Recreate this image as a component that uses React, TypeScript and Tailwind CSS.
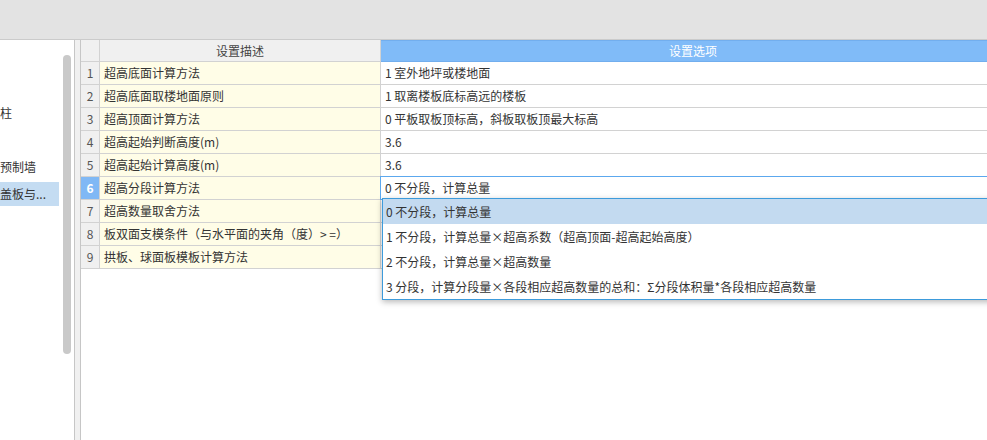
const rows = [
  { desc: "超高底面计算方法", value: "1 室外地坪或楼地面" },
  { desc: "超高底面取楼地面原则", value: "1 取离楼板底标高远的楼板" },
  { desc: "超高顶面计算方法", value: "0 平板取板顶标高，斜板取板顶最大标高" },
  { desc: "超高起始判断高度(m)", value: "3.6" },
  { desc: "超高起始计算高度(m)", value: "3.6" },
  { desc: "超高分段计算方法", value: "0 不分段，计算总量" },
  { desc: "超高数量取舍方法", value: "" },
  { desc: "板双面支模条件（与水平面的夹角（度）> =）", value: "" },
  { desc: "拱板、球面板模板计算方法", value: "" },
];

const options = [
  "0 不分段，计算总量",
  "1 不分段，计算总量×超高系数（超高顶面-超高起始高度）",
  "2 不分段，计算总量×超高数量",
  "3 分段，计算分段量×各段相应超高数量的总和：Σ分段体积量*各段相应超高数量",
];

const treeItems = [
  { label: "", selected: false },
  { label: "", selected: false },
  { label: "柱", selected: false },
  { label: "", selected: false },
  { label: "预制墙", selected: false },
  { label: "盖板与...", selected: true },
];

export default function App() {
  return (
    <div
      className="flex h-[440px] w-[987px] flex-col overflow-hidden bg-white text-[12px] text-[#333]"
      style={{ fontFamily: '"Microsoft YaHei", "Noto Sans CJK SC", "Noto Sans", sans-serif' }}
    >
      {/* top band */}
      <div className="h-[40px] shrink-0 border-b border-[#cbcbcb] bg-[#e3e3e3]" />

      <div className="flex min-h-0 flex-1">
        {/* left tree */}
        <div className="flex w-[74px] shrink-0">
          <div className="w-[63px] overflow-hidden pt-[4px]">
            {treeItems.map((item, i) => (
              <div key={i} className="mt-[3px] h-[24px] w-[59px]">
                <div
                  className={
                    "flex h-[24px] items-center whitespace-nowrap " +
                    (item.selected ? "bg-[#c4dcf2]" : "")
                  }
                >
                  {item.label}
                </div>
              </div>
            ))}
          </div>
          <div className="w-[8px] pt-[15px]">
            <div className="h-[299px] w-[8px] rounded-full bg-[#c9c9c9]" />
          </div>
        </div>

        {/* splitter */}
        <div className="w-[7px] shrink-0 border-x border-[#c6c6c6] bg-[#f0f0f0]" />

        {/* grid */}
        <div className="relative min-w-0 flex-1 overflow-hidden">
          <div className="w-[924px]">
            {/* header */}
            <div className="flex h-[22px]">
              <div className="w-[19px] shrink-0 border-r border-b border-[#d2d2d2] bg-[#f0f0f0]" />
              <div className="flex w-[281px] shrink-0 items-center justify-center border-r border-b border-[#d2d2d2] bg-[#f0f0f0] text-[#444]">
                设置描述
              </div>
              <div className="flex flex-1 items-center justify-center border-y border-[#72aeee] bg-[#80bbf8] text-white">
                设置选项
              </div>
            </div>

            {rows.map((row, i) => {
              const active = i === 5;
              return (
                <div key={i} className="flex h-[23px]">
                  <div
                    className={
                      "flex w-[19px] shrink-0 items-center justify-center border-r border-b border-[#d2d2d2] " +
                      (active ? "bg-[#80b8f5] font-bold text-white" : "bg-[#f0f0f0] text-[#555]")
                    }
                  >
                    {i + 1}
                  </div>
                  <div className="flex w-[281px] shrink-0 items-center whitespace-nowrap border-r border-b border-[#d2d2d2] bg-[#fffde7] pl-[4px]">
                    {row.desc}
                  </div>
                  <div
                    className={
                      "flex flex-1 items-center whitespace-nowrap pl-[4px] " +
                      (active
                        ? "-mt-px -ml-px h-[24px] border border-[#5ca8ee] bg-white pl-[4px]"
                        : i === 4
                          ? "border-b border-[#5ca8ee] bg-white"
                          : "border-b border-[#d2d2d2] bg-white")
                    }
                  >
                    {row.value}
                  </div>
                </div>
              );
            })}
          </div>

          {/* dropdown */}
          <div className="absolute top-[158px] left-[301px] w-[640px] border border-[#3d9bdb] bg-white shadow-[0_2px_6px_rgba(0,0,0,0.28)]">
            {options.map((opt, i) => (
              <div
                key={i}
                className={
                  "flex h-[25px] items-center whitespace-nowrap pl-[3px] " +
                  (i === 0 ? "bg-[#c3daf0]" : "")
                }
              >
                {opt}
              </div>
            ))}
          </div>
        </div>
      </div>
    </div>
  );
}
